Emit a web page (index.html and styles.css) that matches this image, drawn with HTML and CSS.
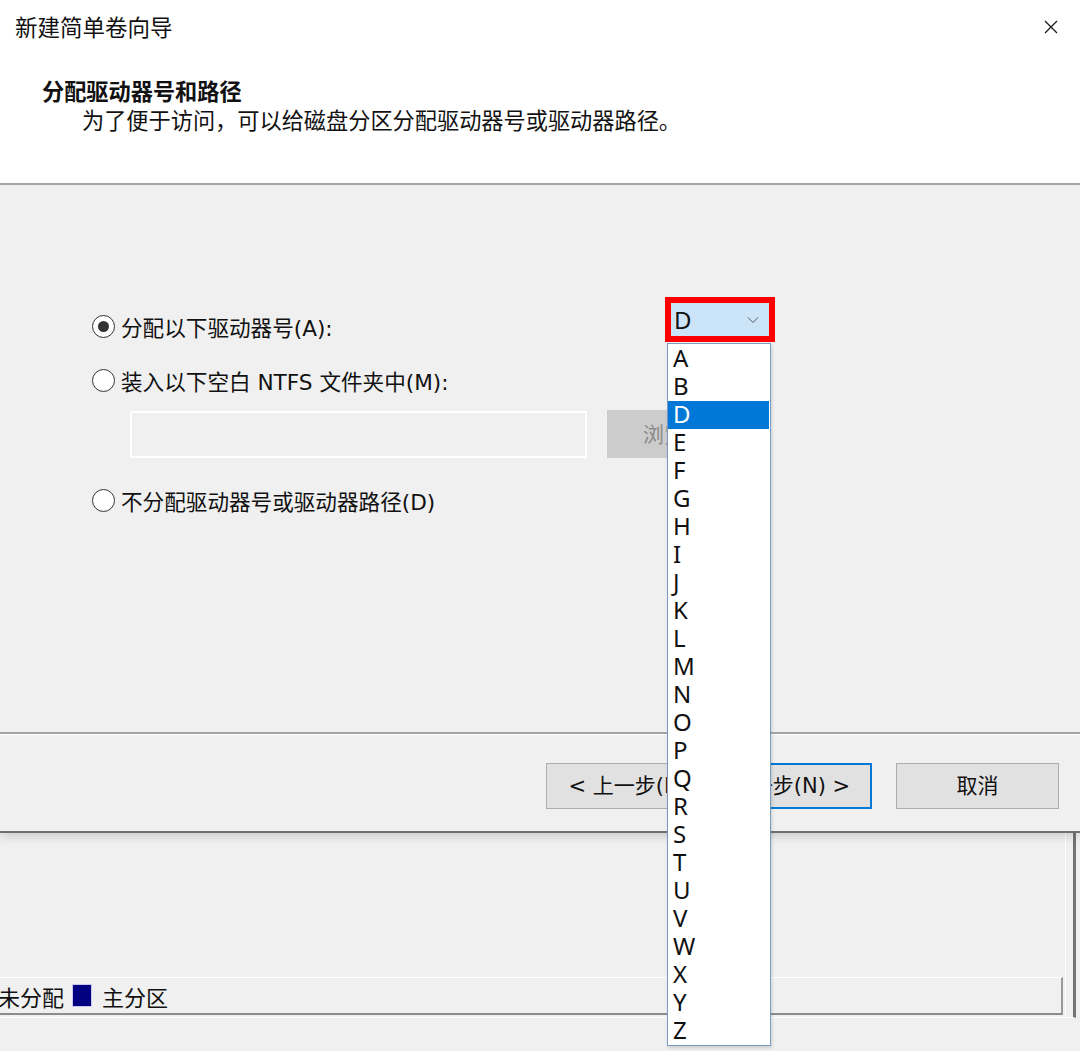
FILE: index.html
```html
<!DOCTYPE html>
<html lang="zh-CN">
<head>
    <meta charset="UTF-8">
    <title>新建简单卷向导</title>
    <link rel="stylesheet" href="styles.css">
</head>
<body>
    <div class="dialog">
        <div class="top">
            <div class="titlebar">
                <span class="title">新建简单卷向导</span>
                <svg class="close" width="14" height="14" viewBox="0 0 14 14">
                    <path d="M1 1L13 13M13 1L1 13" stroke="#1a1a1a" stroke-width="1.3" fill="none"/>
                </svg>
            </div>
            <h1>分配驱动器号和路径</h1>
            <p class="subtitle">为了便于访问，可以给磁盘分区分配驱动器号或驱动器路径。</p>
        </div>

        <div class="content">
            <div class="options">
                <div class="option">
                    <span class="radio checked"></span>
                    <span>分配以下驱动器号(A):</span>
                </div>
                <div class="option second">
                    <span class="radio"></span>
                    <span>装入以下空白 NTFS 文件夹中(M):</span>
                </div>
                <div class="path-row">
                    <div class="path-input"></div>
                    <div class="browse">浏览(R)...</div>
                </div>
                <div class="option third">
                    <span class="radio"></span>
                    <span>不分配驱动器号或驱动器路径(D)</span>
                </div>
            </div>
        </div>

        <div class="footer">
            <div class="btn">&lt; 上一步(B)</div>
            <div class="btn primary">下一步(N) &gt;</div>
            <div class="btn cancel">取消</div>
        </div>
    </div>

    <div class="backdrop">
        <div class="pane">
            <div class="legend">
                <span class="unalloc">未分配</span>
                <span class="swatch"></span>
                <span>主分区</span>
            </div>
        </div>
    </div>

    <!-- drive letter combo, opened -->
    <div class="combo">
        <span>D</span>
        <svg width="12" height="8" viewBox="0 0 12 8">
            <path d="M1 1.5L6 6.5L11 1.5" stroke="#555" stroke-width="1" fill="none"/>
        </svg>
    </div>
    <ul class="letters" id="letters"></ul>

    <script>
        const letters = 'ABDEFGHIJKLMNOPQRSTUVWXYZ'.split('');
        const list = document.getElementById('letters');
        letters.forEach(l => {
            const li = document.createElement('li');
            li.textContent = l;
            if (l === 'D') li.className = 'selected';
            list.appendChild(li);
        });
    </script>
</body>
</html>
```

FILE: styles.css
```css
body {
    margin: 0;
    width: 1080px;
    height: 1051px;
    overflow: hidden;
    font-family: "Noto Sans", "Noto Sans CJK SC", sans-serif;
    color: #111;
    background: #f0f0f0;
    position: relative;
}

.dialog {
    background: #f0f0f0;
    border-bottom: 2px solid #6f6f6f;
    box-shadow: 0 4px 9px rgba(0, 0, 0, 0.14);
    position: relative;
    z-index: 1;
}

/* white header */
.top {
    background: #fff;
    height: 183px;
    border-bottom: 2px solid #a5a5a5;
}

.titlebar {
    display: flex;
    align-items: center;
    justify-content: space-between;
    height: 30px;
    padding: 13px 22px 0 15px;
}

.title {
    font-size: 22.5px;
    line-height: 30px;
}

.close {
    margin-top: -2px;
}

h1 {
    margin: 34px 0 0 42px;
    font-size: 22.2px;
    line-height: 30px;
    font-weight: bold;
}

.subtitle {
    margin: 0 0 0 82px;
    font-size: 22.2px;
    line-height: 28px;
}

/* options */
.content {
    height: 547px;
    border-bottom: 2px solid #a3a3a3;
    box-shadow: 0 1px 0 #fff;
}

.options {
    padding: 126px 0 0 91px;
}

.option {
    display: flex;
    align-items: center;
    gap: 6px;
    height: 30px;
    font-family: "DejaVu Sans", "Noto Sans CJK SC", sans-serif;
    font-size: 21.6px;
}

.option.second {
    margin-top: 24px;
}

.option.third {
    margin-top: 27px;
}

.radio {
    width: 21px;
    height: 21px;
    margin-left: 1px;
    border: 1.5px solid #333;
    border-radius: 50%;
    background: #fff;
    display: flex;
    align-items: center;
    justify-content: center;
}

.radio.checked::after {
    content: '';
    width: 11px;
    height: 11px;
    border-radius: 50%;
    background: #333;
}

.path-row {
    display: flex;
    gap: 20px;
    margin: 16px 0 0 39px;
}

.path-input {
    width: 453px;
    height: 43px;
    border: 2px solid #fff;
    background: #f0f0f0;
}

.browse {
    width: 124px;
    height: 48px;
    margin-top: -1px;
    padding-left: 36px;
    background: #cccccc;
    color: #8b8b8b;
    font-size: 21px;
    line-height: 48px;
}

/* buttons */
.footer {
    height: 68px;
    padding: 29px 21px 0 0;
    display: flex;
    justify-content: flex-end;
    align-items: flex-start;
}

.btn {
    width: 161px;
    height: 44px;
    border: 1px solid #adadad;
    background: #e1e1e1;
    font-family: "DejaVu Sans", "Noto Sans CJK SC", sans-serif;
    font-size: 21px;
    line-height: 44px;
    text-align: center;
}

.btn.primary {
    border-color: #0078d7;
    box-shadow: inset 0 0 0 1px #0078d7;
}

.btn.cancel {
    margin-left: 24px;
}

/* window behind the dialog */
.backdrop {
    height: 217px;
}

.pane {
    height: 184px;
    margin-right: 4px;
    border-right: 3px solid #747474;
    border-bottom: 1px solid #fff;
    display: flex;
    flex-direction: column;
    justify-content: flex-end;
    box-shadow: inset -7px 0 0 #f0f0f0, inset -8px 0 0 #fff;
}

.legend {
    width: 1061px;
    height: 35px;
    border-top: 1px solid #fff;
    border-bottom: 2px solid #8c8c8c;
    border-right: 2px solid #9a9a9a;
    margin-bottom: 2px;
    display: flex;
    align-items: center;
    font-size: 22px;
}

.unalloc {
    margin-left: -2px;
}

.swatch {
    width: 18px;
    height: 21px;
    background: #000080;
    border: 1px solid #c8c8f0;
    margin: 0 10px 0 8px;
}

/* combo box with the red mark */
.combo {
    position: absolute;
    left: 665px;
    top: 297px;
    height: 33px;
    width: 85px;
    border: 6px solid #ff0000;
    background: #cce4f7;
    display: flex;
    align-items: center;
    justify-content: space-between;
    padding: 0 10px 0 3px;
    font-size: 24px;
    z-index: 3;
}

.letters {
    position: absolute;
    left: 667px;
    top: 343px;
    width: 102px;
    margin: 0;
    padding: 1px 0 0;
    list-style: none;
    background: #fff;
    border: 1px solid #7a9cc4;
    box-shadow: 1px 2px 3px rgba(0, 0, 0, 0.15);
    z-index: 2;
}

.letters li {
    height: 28px;
    line-height: 25px;
    padding-left: 5px;
    box-sizing: border-box;
    font-size: 24px;
    color: #111;
}

.letters li.selected {
    background: #0078d7;
    color: #fff;
    margin-right: 1px;
}
```
